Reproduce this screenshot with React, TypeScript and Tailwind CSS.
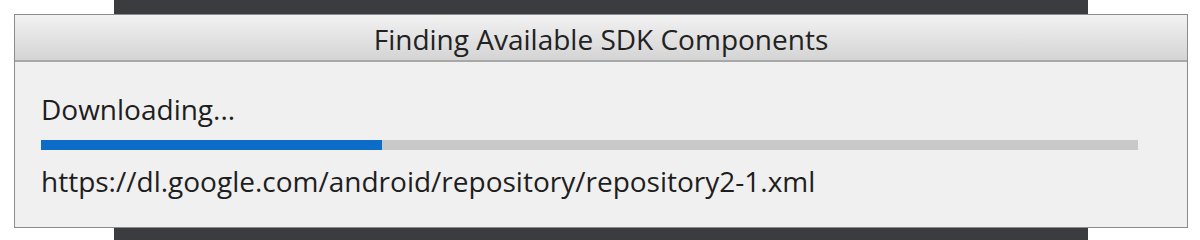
export default function App() {
  const font = { fontFamily: '"Open Sans", "Noto Sans", sans-serif' };
  return (
    <div className="w-[1200px] h-[240px] bg-white flex flex-col overflow-hidden" style={font}>
      <div className="ml-[114px] w-[974px] h-[14px] bg-[#3a3c3f] shrink-0" />
      <div className="ml-[14px] w-[1174px] h-[214px] border border-[#8c8c8c] bg-[#f0f0f0] flex flex-col shrink-0">
        <div className="h-[47px] pt-[3px] bg-gradient-to-b from-[#f2f2f2] to-[#d4d4d4] border-b-2 border-[#a8a8a8] flex items-center justify-center shrink-0">
          <span className="text-[28px] text-[#222] leading-none">Finding Available SDK Components</span>
        </div>
        <div className="flex flex-col pl-[26px] pr-[50px]">
          <div className="mt-[31px] text-[28px] leading-[32px] text-[#1e1e1e]">Downloading...</div>
          <div className="mt-[15px] h-[10px] w-[1097px] bg-[#c9c9c9] flex">
            <div className="w-[341px] h-full bg-[#0c6cc7]" />
          </div>
          <div className="mt-[15px] text-[28px] leading-[32px] text-[#1e1e1e]">https://dl.google.com/android/repository/repository2-1.xml</div>
        </div>
      </div>
      <div className="ml-[114px] w-[974px] flex-1 bg-[#3a3c3f]" />
    </div>
  );
}
